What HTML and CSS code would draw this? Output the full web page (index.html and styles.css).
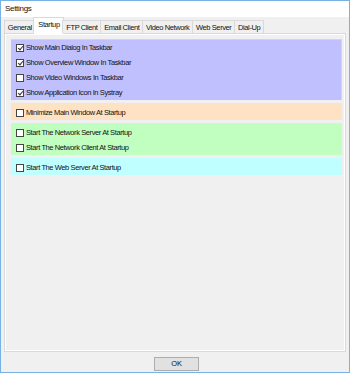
FILE: index.html
```html
<!DOCTYPE html>
<html lang="en">
<head>
	<meta charset="UTF-8">
	<title>Settings</title>
	<link rel="stylesheet" href="styles.css">
</head>
<body>

	<div class="window">
		<div class="titlebar">Settings</div>

		<div class="tabs">
			<div class="tab">General</div>
			<div class="tab active">Startup</div>
			<div class="tab">FTP Client</div>
			<div class="tab">Email Client</div>
			<div class="tab">Video Network</div>
			<div class="tab">Web Server</div>
			<div class="tab">Dial-Up</div>
		</div>

		<div class="panel">
			<div class="group blue">
				<div class="row"><span class="check on"></span>Show Main Dialog In Taskbar</div>
				<div class="row"><span class="check on"></span>Show Overview Window In Taskbar</div>
				<div class="row"><span class="check"></span>Show Video Windows In Taskbar</div>
				<div class="row"><span class="check on"></span>Show Application Icon In Systray</div>
			</div>
			<div class="group orange">
				<div class="row"><span class="check"></span>Minimize Main Window At Startup</div>
			</div>
			<div class="group green">
				<div class="row"><span class="check"></span>Start The Network Server At Startup</div>
				<div class="row"><span class="check"></span>Start The Network Client At Startup</div>
			</div>
			<div class="group cyan">
				<div class="row"><span class="check"></span>Start The Web Server At Startup</div>
			</div>
		</div>

		<div class="footer">
			<button class="btn">OK</button>
		</div>
	</div>

</body>
</html>
```

FILE: styles.css
```css
body {
	margin: 0;
	font-family: "Liberation Sans", Arial, sans-serif;
	font-size: 7.5px;
	letter-spacing: -0.4px;
	color: #111;
}

.window {
	width: 350px;
	height: 373px;
	box-sizing: border-box;
	border: 1px solid #78b2e4;
	background: #f0f0f0;
	display: flex;
	flex-direction: column;
}

.titlebar {
	height: 16px;
	line-height: 15px;
	padding-left: 4px;
	background: #fff;
	font-size: 8px;
	letter-spacing: -0.3px;
}

.tabs {
	display: flex;
	align-items: flex-end;
	height: 16px;
	padding-left: 3px;
	position: relative;
	z-index: 1;
}

.tab {
	height: 13px;
	line-height: 13px;
	padding: 0 2.8px;
	border: 1px solid #d9d9d9;
	border-bottom: none;
	margin-right: -1px;
	box-sizing: border-box;
	background: #f0f0f0;
}

.tab.active {
	height: 17px;
	line-height: 14px;
	background: #fff;
	margin-bottom: -1px;
	padding: 0 3.8px;
	margin-left: -1px;
	margin-right: -2px;
}

.panel {
	height: 319px;
	box-sizing: border-box;
	margin: 0 3px;
	border: 1px solid #d9d9d9;
	box-shadow: inset -1px -1px 0 #fff, inset 1px 1px 0 #fff;
	padding: 5px 3px 0 6px;
}

.group {
	padding-top: 2px;
	margin-bottom: 3px;
}

.group.blue {
	background: #c0c0ff;
	padding-top: 1px;
	box-shadow: inset -1px 1px 0 #d0d0ff;
}

.group.orange {
	background: #ffe1c3;
}

.group.green {
	background: #c0ffc0;
}

.group.cyan {
	background: #c0ffff;
}

.row {
	display: flex;
	align-items: center;
	height: 15px;
	padding-left: 5px;
}

.check {
	width: 8px;
	height: 8px;
	box-sizing: border-box;
	border: 1px solid #444;
	background: #fff;
	margin-right: 2px;
	position: relative;
}

.check.on::after {
	content: "";
	position: absolute;
	left: 1.5px;
	top: 0;
	width: 2px;
	height: 4px;
	border: solid #333;
	border-width: 0 1px 1px 0;
	transform: rotate(40deg);
}

.footer {
	display: flex;
	justify-content: center;
	padding-top: 5px;
}

.btn {
	width: 45px;
	height: 14px;
	padding: 0;
	border: 1px solid #adadad;
	background: #e1e1e1;
	font-family: inherit;
	font-size: 7.5px;
	letter-spacing: -0.2px;
	line-height: 12px;
	margin-left: 3px;
	color: #111;
}
```
